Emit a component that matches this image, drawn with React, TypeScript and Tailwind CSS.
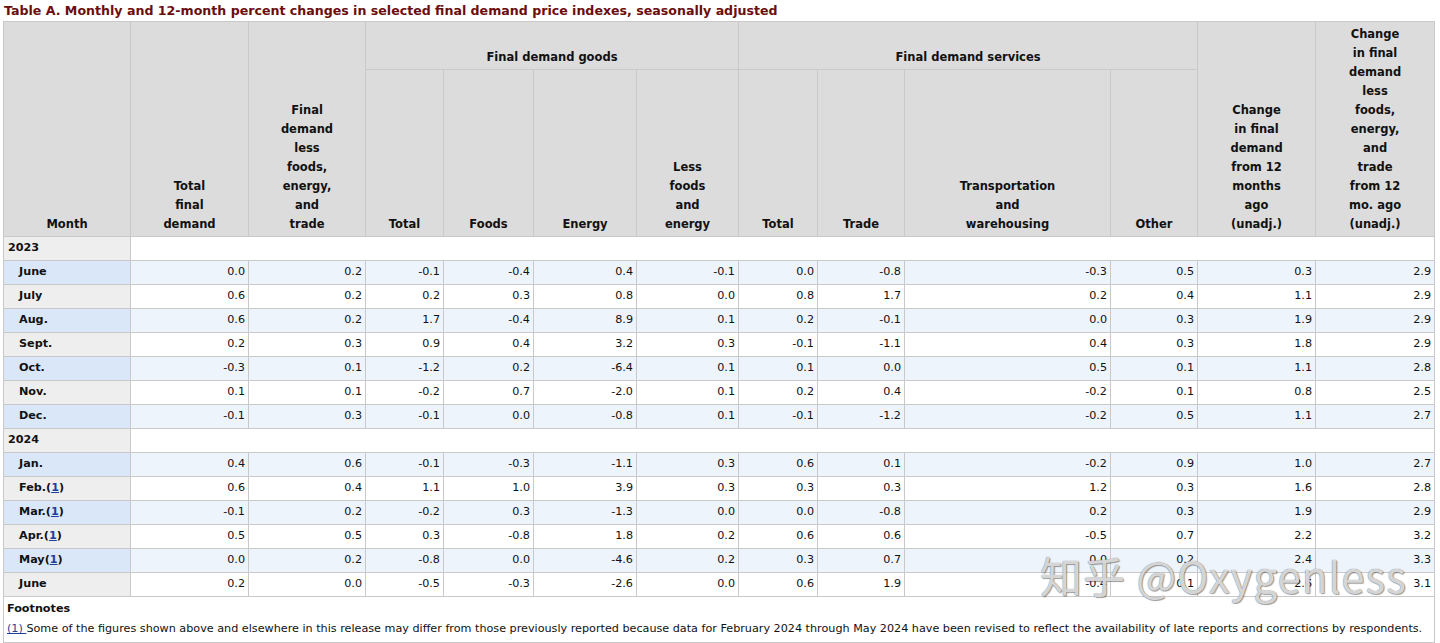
const FONT = { fontFamily: '"DejaVu Sans", Verdana, sans-serif' };

type Row = { month: string; note?: boolean; values: string[] };

const DATA: { year: string; rows: Row[] }[] = [
  {
    year: "2023",
    rows: [
      { month: "June", values: ["0.0", "0.2", "-0.1", "-0.4", "0.4", "-0.1", "0.0", "-0.8", "-0.3", "0.5", "0.3", "2.9"] },
      { month: "July", values: ["0.6", "0.2", "0.2", "0.3", "0.8", "0.0", "0.8", "1.7", "0.2", "0.4", "1.1", "2.9"] },
      { month: "Aug.", values: ["0.6", "0.2", "1.7", "-0.4", "8.9", "0.1", "0.2", "-0.1", "0.0", "0.3", "1.9", "2.9"] },
      { month: "Sept.", values: ["0.2", "0.3", "0.9", "0.4", "3.2", "0.3", "-0.1", "-1.1", "0.4", "0.3", "1.8", "2.9"] },
      { month: "Oct.", values: ["-0.3", "0.1", "-1.2", "0.2", "-6.4", "0.1", "0.1", "0.0", "0.5", "0.1", "1.1", "2.8"] },
      { month: "Nov.", values: ["0.1", "0.1", "-0.2", "0.7", "-2.0", "0.1", "0.2", "0.4", "-0.2", "0.1", "0.8", "2.5"] },
      { month: "Dec.", values: ["-0.1", "0.3", "-0.1", "0.0", "-0.8", "0.1", "-0.1", "-1.2", "-0.2", "0.5", "1.1", "2.7"] },
    ],
  },
  {
    year: "2024",
    rows: [
      { month: "Jan.", values: ["0.4", "0.6", "-0.1", "-0.3", "-1.1", "0.3", "0.6", "0.1", "-0.2", "0.9", "1.0", "2.7"] },
      { month: "Feb.", note: true, values: ["0.6", "0.4", "1.1", "1.0", "3.9", "0.3", "0.3", "0.3", "1.2", "0.3", "1.6", "2.8"] },
      { month: "Mar.", note: true, values: ["-0.1", "0.2", "-0.2", "0.3", "-1.3", "0.0", "0.0", "-0.8", "0.2", "0.3", "1.9", "2.9"] },
      { month: "Apr.", note: true, values: ["0.5", "0.5", "0.3", "-0.8", "1.8", "0.2", "0.6", "0.6", "-0.5", "0.7", "2.2", "3.2"] },
      { month: "May", note: true, values: ["0.0", "0.2", "-0.8", "0.0", "-4.6", "0.2", "0.3", "0.7", "0.0", "0.2", "2.4", "3.3"] },
      { month: "June", values: ["0.2", "0.0", "-0.5", "-0.3", "-2.6", "0.0", "0.6", "1.9", "-0.4", "0.1", "2.6", "3.1"] },
    ],
  },
];

const WIDTHS = [127, 118, 117, 78, 90, 103, 102, 79, 87, 206, 87, 118, 119];

const th = "border border-[#c9c9c9] bg-[#dcdcdc] px-1 pt-[3px] pb-[2px] align-bottom text-center text-[11.5px] font-bold leading-[19px]";

function Lines({ items }: { items: string[] }) {
  return (
    <>
      {items.map((t, i) => (
        <span key={i}>
          {t}
          {i < items.length - 1 && <br />}
        </span>
      ))}
    </>
  );
}

export default function App() {
  return (
    <div className="relative min-h-[643px] w-[1440px] bg-white pl-[3px] text-[11.2px] text-[#111]" style={FONT}>
      <h1 className="pl-[1px] text-[12.6px] leading-[21px] font-bold text-[#6b0d0d]">
        Table A. Monthly and 12-month percent changes in selected final demand price indexes, seasonally adjusted
      </h1>
      <table className="w-[1431px] table-fixed border-collapse">
        <colgroup>
          {WIDTHS.map((w, i) => (
            <col key={i} style={{ width: w }} />
          ))}
        </colgroup>
        <thead>
          <tr className="h-[48px]">
            <th rowSpan={2} className={th}>Month</th>
            <th rowSpan={2} className={th}><Lines items={["Total", "final", "demand"]} /></th>
            <th rowSpan={2} className={th}><Lines items={["Final", "demand", "less", "foods,", "energy,", "and", "trade"]} /></th>
            <th colSpan={4} className={`${th} pb-[0px]`}>Final demand goods</th>
            <th colSpan={4} className={`${th} pb-[0px]`}>Final demand services</th>
            <th rowSpan={2} className={th}><Lines items={["Change", "in final", "demand", "from 12", "months", "ago", "(unadj.)"]} /></th>
            <th rowSpan={2} className={th}><Lines items={["Change", "in final", "demand", "less", "foods,", "energy,", "and", "trade", "from 12", "mo. ago", "(unadj.)"]} /></th>
          </tr>
          <tr>
            <th className={th}>Total</th>
            <th className={th}>Foods</th>
            <th className={th}>Energy</th>
            <th className={th}><Lines items={["Less", "foods", "and", "energy"]} /></th>
            <th className={th}>Total</th>
            <th className={th}>Trade</th>
            <th className={th}><Lines items={["Transportation", "and", "warehousing"]} /></th>
            <th className={th}>Other</th>
          </tr>
        </thead>
        <tbody>
          {DATA.map((group) => (
            <YearGroup key={group.year} year={group.year} rows={group.rows} />
          ))}
        </tbody>
        <tfoot>
          <tr>
            <td colSpan={13} className="border border-[#c9c9c9] px-[3px] pt-[2px] pb-[3px] leading-[20px]">
              <p className="font-bold">Footnotes</p>
              <p>
                <a className="text-[#1f3f9a] underline">(1) </a>
                Some of the figures shown above and elsewhere in this release may differ from those previously reported because data for February 2024 through May 2024 have been revised to reflect the availability of late reports and corrections by respondents.
              </p>
            </td>
          </tr>
        </tfoot>
      </table>

      <div
        className="pointer-events-none absolute left-[1040px] top-[549px] text-[42px] leading-[52px] tracking-[1px] text-white/75 [text-shadow:0_0_1px_#555,1px_1px_1px_rgba(0,0,0,0.35)]"
        style={{ fontFamily: '"Noto Sans CJK SC", "Noto Sans", sans-serif' }}
      >
        知乎 @Oxygenless
      </div>
    </div>
  );
}

function YearGroup({ year, rows }: { year: string; rows: Row[] }) {
  return (
    <>
      <tr className="h-[24px]">
        <td className="border border-[#c9c9c9] bg-[#eeeeee] px-[4px] font-bold">{year}</td>
        <td colSpan={12} className="border border-[#c9c9c9] bg-white" />
      </tr>
      {rows.map((r, i) => {
        const blue = i % 2 === 0;
        return (
          <tr key={r.month} className={`h-[24px] ${blue ? "bg-[#eef4fc]" : "bg-white"}`}>
            <td className={`border border-[#c9c9c9] pl-[15px] font-bold ${blue ? "bg-[#dae7f9]" : "bg-[#eeeeee]"}`}>
              {r.month}
              {r.note && (
                <>
                  (<a className="text-[#1f3f9a] underline">1</a>)
                </>
              )}
            </td>
            {r.values.map((v, j) => (
              <td key={j} className="border border-[#c9c9c9] px-[3px] text-right">
                {v}
              </td>
            ))}
          </tr>
        );
      })}
    </>
  );
}
